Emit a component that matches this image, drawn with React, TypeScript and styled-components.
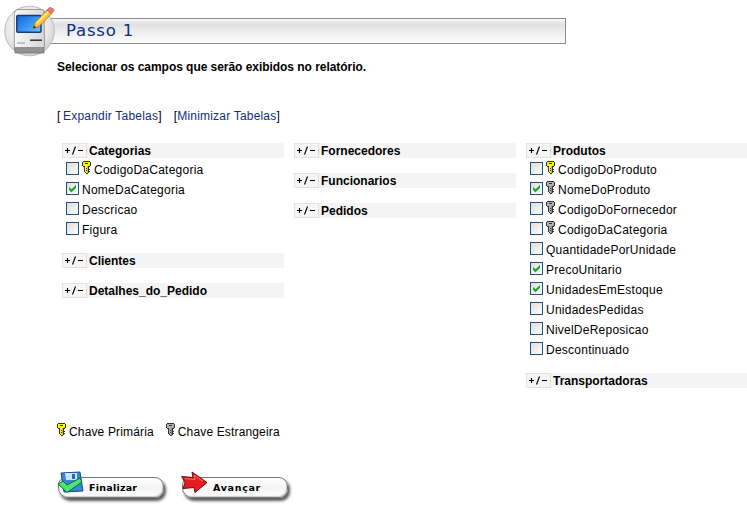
import React from 'react';
import styled, { createGlobalStyle } from 'styled-components';

const Global = createGlobalStyle`
  * { box-sizing: border-box; }
  body { margin: 0; background: #fff; color: #000; overflow: hidden;
    font-family: "Liberation Sans", Arial, sans-serif; font-size: 12px; line-height: 15px; }
`;
const Page = styled.main`width: 747px; height: 508px; overflow: hidden;`;
const Header = styled.header`display: flex; align-items: flex-start; height: 60px; padding: 5px 0 0 4px;`;
const HeaderIcon = styled.svg`width: 52px; height: 52px; flex: none; position: relative; z-index: 1;`;
const TitleBar = styled.h1`
  margin: 13px 0 0 -6px; width: 516px; height: 26px; padding-left: 16px;
  border: 1px solid #8c8c8c; border-left: 0;
  background: linear-gradient(#f8f8f8 0, #e0e0e0 22%, #f0f0f0 60%, #fdfdfd 100%);
  font: 16.5px/24px "DejaVu Sans", Verdana, sans-serif; letter-spacing: 0.8px; color: #0a2f8c;
`;
const Intro = styled.p`margin: 0 0 0 57px; font-weight: bold; letter-spacing: -0.045px;`;
const Links = styled.nav`display: flex; gap: 12px; margin: 34px 0 0 57px; height: 34px; letter-spacing: 0.2px;`;
const OpenBracket = styled.span`margin-right: -1px;`;
const Link = styled.a`color: #0e3080; text-decoration: none;`;
const Columns = styled.section`
  display: grid; grid-template-columns: repeat(3, 222px); gap: 10px;
  margin-left: 62px; height: 280px; width: 700px;
`;
const Column = styled.div`display: flex; flex-direction: column; gap: 15px;`;
const Group = styled.section``;
const GroupHead = styled.h2`
  display: flex; gap: 2px; margin: 0; height: 15px;
  background: #f4f4f4; font-size: 12px; line-height: 17px;
`;
const Toggle = styled.button`
  display: flex; align-items: center; justify-content: center; width: 25px; height: 15px;
  padding: 0; border: 1px solid #e2e2e2; background: #f6f6f6;
`;
const Rows = styled.div`display: flex; flex-direction: column; padding: 1px 0 0 4px; margin-bottom: -1px;`;
const Row = styled.label`display: flex; align-items: flex-start; height: 20px; letter-spacing: 0.24px;`;
const Box = styled.span`
  width: 13px; height: 13px; margin: 3px 3px 0 0; border: 1px solid #1d5281; flex: none;
  background: linear-gradient(135deg, #dcdcd7, #fff); display: flex;
`;
const FieldName = styled.span`padding-top: 4px;`;
const KeySvg = styled.svg<{ $raised?: boolean }>`
  width: 9px; height: 13px; flex: none; margin-right: 3px; margin-top: ${(p) => (p.$raised ? 2 : 0)}px;
`;
const Legend = styled.div`display: flex; gap: 12px; margin-left: 57px; height: 48px; letter-spacing: 0.15px;`;
const LegendItem = styled.span`display: flex; align-items: flex-start;`;
const LegendText = styled.span`padding-top: 2px;`;
const Actions = styled.footer`display: flex; gap: 10px; margin-left: 57px;`;
const Action = styled.button`
  position: relative; display: flex; align-items: flex-start; width: 114px; height: 34px;
  padding: 6px 0 0 1px; border: 0; background: none;
  font: bold 9.5px/13px "DejaVu Sans", Verdana, sans-serif; color: #000;
`;
const Pill = styled.span<{ $spacing: number }>`
  display: flex; align-items: center; width: 106px; height: 21px; padding: 0 0 1px 30px;
  letter-spacing: ${(p) => p.$spacing}px;
  border: 1px solid #777; border-radius: 8px 9px 9px 10px;
  background: linear-gradient(#fff 0, #f4f4f4 50%, #fff 100%);
  box-shadow: inset -1px -1px 1px #ccc, 2px 3px 3px #5c5c5c;
`;
const ActionIcon = styled.svg`position: absolute; left: 0; top: 0; width: 28px; height: 24px;`;

const KEY = [
  '.kkkkkkk.', 'kfffffffk', 'kffkkkffk', 'kfffffffk', 'kffffffbk', '.kkffbkk.', '..kffbk..',
  '..kfkbk..', '..kffbkk.', '..kfkbk..', '..kffbkk.', '...kfbk..', '....kk...',
];
function Key({ kind, raised }: { kind: 'primary' | 'foreign'; raised?: boolean }) {
  const fill = kind === 'primary' ? '#fff212' : '#b0b0b0';
  const shade = kind === 'primary' ? '#cfc400' : '#858585';
  return (
    <KeySvg viewBox="0 0 9 13" shapeRendering="crispEdges" $raised={raised}>
      {KEY.flatMap((line, y) => [...line].map((c, x) => c === '.' ? null : (
        <rect key={`${x}-${y}`} x={x} y={y} width="1" height="1" fill={c === 'k' ? '#333' : c === 'f' ? fill : shade} />
      )))}
    </KeySvg>
  );
}

type Field = { name: string; key?: 'primary' | 'foreign'; on?: boolean };
type Table = { name: string; fields?: Field[] };
const columns: Table[][] = [
  [
    { name: 'Categorias', fields: [
      { name: 'CodigoDaCategoria', key: 'primary' }, { name: 'NomeDaCategoria', on: true },
      { name: 'Descricao' }, { name: 'Figura' }] },
    { name: 'Clientes' }, { name: 'Detalhes_do_Pedido' },
  ],
  [{ name: 'Fornecedores' }, { name: 'Funcionarios' }, { name: 'Pedidos' }],
  [
    { name: 'Produtos', fields: [
      { name: 'CodigoDoProduto', key: 'primary' }, { name: 'NomeDoProduto', key: 'foreign', on: true },
      { name: 'CodigoDoFornecedor', key: 'foreign' }, { name: 'CodigoDaCategoria', key: 'foreign' },
      { name: 'QuantidadePorUnidade' }, { name: 'PrecoUnitario', on: true },
      { name: 'UnidadesEmEstoque', on: true }, { name: 'UnidadesPedidas' },
      { name: 'NivelDeReposicao' }, { name: 'Descontinuado' }] },
    { name: 'Transportadoras' },
  ],
];

function TableGroup({ table }: { table: Table }) {
  return (
    <Group>
      <GroupHead>
        <Toggle aria-label="+/-">
          <svg width="21" height="11" viewBox="0 0 21 11" stroke="#000" fill="none">
            <path d="M1 5.5h5M3.5 3v5M14 5.5h5" strokeWidth="1.1" /><path d="M8.500 9.500L11.500 1.500" strokeWidth="1.200" />
          </svg>
        </Toggle>
        {table.name}
      </GroupHead>
      {table.fields && (
        <Rows>
          {table.fields.map((f) => (
            <Row key={f.name}>
              <Box>{f.on && <svg width="11" height="11" viewBox="0 0 11 11"><path d="M2 4L4.500 6.300L9 2V4.800L4.500 9.200L2 6.800Z" fill="#21a121" /></svg>}</Box>
              {f.key && <Key kind={f.key} raised />}
              <FieldName>{f.name}</FieldName>
            </Row>
          ))}
        </Rows>
      )}
    </Group>
  );
}

export default function App() {
  return (
    <Page>
      <Global />
      <Header>
        <HeaderIcon viewBox="0 0 52 52">
          <defs>
            <radialGradient id="disc" cx=".45" cy=".4" r=".6"><stop stopColor="#fff" /><stop offset=".7" stopColor="#e9e9e9" /><stop offset="1" stopColor="#d2d2d2" /></radialGradient>
            <linearGradient id="screen" x2="1" y2="1"><stop stopColor="#1565d8" /><stop offset=".6" stopColor="#3c9cf5" /><stop offset="1" stopColor="#72c8ff" /></linearGradient>
            <linearGradient id="case" x2="1" y2="0"><stop stopColor="#f8f8f8" /><stop offset="1" stopColor="#d6d6d6" /></linearGradient>
          </defs>
          <circle cx="25.5" cy="26" r="24.8" fill="url(#disc)" stroke="#bbb" />
          <path d="M10.500 42h29.500v6H11z" fill="#929292" stroke="#6c6c6c" strokeWidth=".7" />
          <path d="M11.500 6Q12 4.500 13 4.500H38Q40 4.500 40 7L40.500 42.500H10.300V8Z" fill="url(#case)" stroke="#888" strokeWidth=".8" />
          <rect x="12.800" y="10.500" width="24.200" height="16.800" rx="1" fill="url(#screen)" stroke="#173b76" strokeWidth="1.500" />
          <path d="M26 35.200h12" stroke="#333" strokeWidth="1.500" /><path d="M13 38h8" stroke="#999" />
          <path d="M29 23.500L31 17.500L43 5L47.500 8.800L35 21.500Z" fill="#ffbf36" stroke="#a66c18" strokeWidth=".7" />
          <path d="M32.500 18.500L44.500 6.500" stroke="#fff09c" strokeWidth="1.400" />
          <path d="M43 5L45.200 2.600Q47 1.800 49.500 4Q50.500 5.500 49 7L47.500 8.800Z" fill="#ec7872" stroke="#9a4a46" strokeWidth=".5" />
          <path d="M29 23.500L30 20.500L32.300 22.500Z" fill="#402c1b" />
        </HeaderIcon>
        <TitleBar>Passo 1</TitleBar>
      </Header>
      <Intro>Selecionar os campos que serão exibidos no relatório.</Intro>
      <Links>
        <span><OpenBracket>[</OpenBracket> <Link>Expandir Tabelas</Link>]</span>
        <span>[<Link>Minimizar Tabelas</Link>]</span>
      </Links>
      <Columns>
        {columns.map((tables, i) => (
          <Column key={i}>{tables.map((t) => <TableGroup key={t.name} table={t} />)}</Column>
        ))}
      </Columns>
      <Legend>
        <LegendItem><Key kind="primary" /><LegendText>Chave Primária</LegendText></LegendItem>
        <LegendItem><Key kind="foreign" /><LegendText>Chave Estrangeira</LegendText></LegendItem>
      </Legend>
      <Actions>
        <Action>
          <Pill $spacing={0.25}>Finalizar</Pill>
          <ActionIcon viewBox="0 0 28 24">
            <path d="M4 2L23 1L26 20L7 21Z" fill="#3987d8" stroke="#174c91" /><path d="M8 2h12v7H9z" fill="#c6e4fa" /><path d="M15 3h3v5h-3z" fill="#2869b4" />
            <path d="M1 13L6 10L10 14L23 7L25 11L10 21.500Z" fill="#4be477" stroke="#126735" />
          </ActionIcon>
        </Action>
        <Action>
          <Pill $spacing={0.7}>Avançar</Pill>
          <ActionIcon viewBox="0 0 28 24">
            <path d="M.7 5.500L12 6.500L11 1L26 11.500L14 21.500L13 16.500L2 17.500L4 11.500Z" fill="#e51c20" stroke="#650d10" /><path d="M4 7.500L14 8.500L13 4L22 10.500" stroke="#ff6d68" fill="none" />
          </ActionIcon>
        </Action>
      </Actions>
    </Page>
  );
}
